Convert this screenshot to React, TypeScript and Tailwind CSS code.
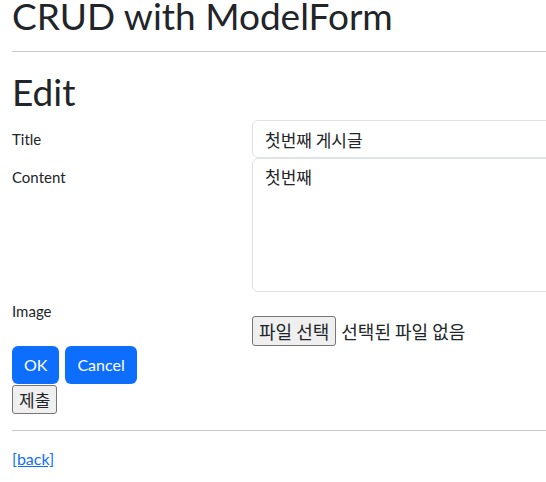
import React from "react"

const FONT = "font-['Lato','Noto_Sans_CJK_KR',sans-serif]"
const KO = "font-['Noto_Sans_CJK_KR',sans-serif] text-[17px]"

export default function App() {
  return (
    <div className={`min-h-screen overflow-hidden bg-white text-[#212529] ${FONT}`}>
      <div className="w-[640px] px-3">
        <h1 className="mb-0 text-[37px] font-normal leading-[31px]">CRUD with ModelForm</h1>
        <hr className="mt-[20px] mb-[16px] border-t border-[#c8c9ca]" />
        <h1 className="mb-[4px] text-[37px] font-normal leading-[48px]">Edit</h1>
        <form>
          <div className="flex">
            <label className="w-[240px] py-[7px] text-[15px] leading-6">Title</label>
            <div className="flex-1">
              <input
                className={`block h-[38px] w-full rounded-md border border-[#dee2e6] px-3 outline-none ${KO}`}
                defaultValue="첫번째 게시글"
              />
            </div>
          </div>
          <div className="flex">
            <label className="w-[240px] py-[7px] text-[15px] leading-6">Content</label>
            <div className="flex-1">
              <textarea
                className={`block h-[134px] w-full resize-none rounded-md border border-[#dee2e6] px-3 py-[6px] leading-6 outline-none ${KO}`}
                defaultValue="첫번째"
              />
            </div>
          </div>
          <div className="flex">
            <label className="w-[240px] py-[7px] text-[15px] leading-6">Image</label>
            <div className="flex flex-1 items-center gap-[5px] pt-6 font-['Noto_Sans_CJK_KR',sans-serif] text-[18px]">
              <button
                type="button"
                className="h-[30px] rounded-[3px] border border-[#767676] bg-[#efefef] px-[6px] leading-none"
              >
                파일 선택
              </button>
              <span>선택된 파일 없음</span>
            </div>
          </div>
          <div className="flex gap-[6px]">
            <button type="button" className="h-[38px] rounded-md bg-[#0d6efd] px-3 text-base text-white">
              OK
            </button>
            <button type="button" className="h-[38px] rounded-md bg-[#0d6efd] px-3 text-base text-white">
              Cancel
            </button>
          </div>
          <button
            type="submit"
            className={`mt-[1px] block h-[29px] rounded-[3px] border border-[#767676] bg-[#efefef] px-[6px] leading-none ${KO}`}
          >
            제출
          </button>
        </form>
        <hr className="my-4 border-t border-[#c8c9ca]" />
        <a href="#" className="text-base leading-6 text-[#0d6efd] underline">
          [back]
        </a>
      </div>
    </div>
  )
}
